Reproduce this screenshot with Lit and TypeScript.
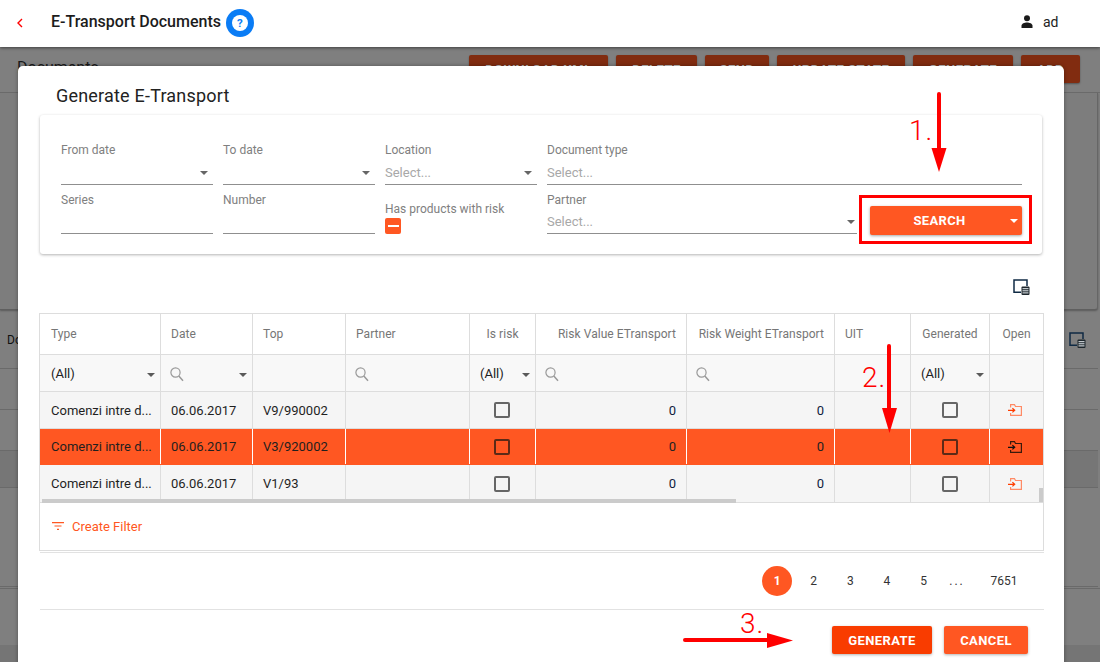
import { LitElement, html, css } from "lit";
import { customElement } from "lit/decorators.js";

const caret = html`<svg class="caret" width="8" height="4" viewBox="0 0 8 4"><path d="M0 0h8L4 4z" fill="currentColor"/></svg>`;
const lens = html`<svg class="lens" width="14" height="15" viewBox="0 0 14 15"><circle cx="5.500" cy="5.500" r="4.600" fill="none" stroke="#999" stroke-width="1.200"/><path d="M8.800 9L13 13.800" stroke="#999" stroke-width="1.500" fill="none"/></svg>`;
const chooser = html`<svg width="17" height="16" viewBox="0 0 17 16"><path d="M8 13.300H1V1h13v6" fill="none" stroke="#0f2a44" stroke-width="1.500"/><rect x="8.500" y="7.500" width="8" height="8.500" rx="1" fill="#1d262c"/><path d="M9.500 9.700h6M9.500 11.800h6M9.500 13.900h6" stroke="#e8eef2" stroke-width="1"/></svg>`;
const openIcon = html`<svg class="open" width="14" height="12" viewBox="0 0 14 12"><path class="fold" d="M2.600 3.500V.7h3.900l1 1.800h5.900v8.800H2.600V9" fill="none" stroke-width="1.200"/><path d="M0 6.300h6.500M4.400 4.200l2.300 2.100-2.300 2.100" fill="none" stroke="currentColor" stroke-width="1.200"/></svg>`;

const columns = ["Type", "Date", "Top", "Partner", "Is risk", "Risk Value ETransport", "Risk Weight ETransport", "UIT", "Generated", "Open"];
const headAlign = ["", "", "", "", "center", "end", "end", "", "center", "center"];
const rows = [
  { top: "V9/990002", cls: "r1" },
  { top: "V3/920002", cls: "sel" },
  { top: "V1/93", cls: "r3" },
];
const bgButtons = ["DOWNLOAD XML", "DELETE", "SEND", "UPDATE STATE", "GENERATE", "ADD"];
const bgWidths = ["w139", "w81", "w64", "w128", "w100", "w59"];

@customElement("app-root")
export class AppRoot extends LitElement {
  static styles = css`
    :host { display: block; font-family: Roboto, "Liberation Sans", sans-serif; color: #212121; }
    .page { position: relative; width: 1100px; height: 662px; overflow: hidden; background: #7f7f7f; }
    .header { height: 47px; background: #fff; display: flex; align-items: center; padding: 0 43px 2px 17px; box-sizing: border-box; box-shadow: 0 1px 3px rgba(0,0,0,.5); position: relative; }
    .back { width: 6px; height: 10px; margin-right: 28px; }
    .apptitle { font-size: 16px; font-weight: 500; color: #1c1c1c; margin: -2px 5px 0 0; }
    .help { width: 28px; height: 28px; border-radius: 50%; background: #0a7cf5; display: flex; align-items: center; justify-content: center; }
    .help span { width: 16px; height: 16px; border-radius: 50%; background: #fff; color: #0a7cf5; font-size: 11.500px; font-weight: 700; line-height: 16px; text-align: center; }
    .user { margin: -2px 0 0 auto; display: flex; align-items: center; gap: 10px; font-size: 14px; color: #222; }
    .user span { width: 14px; }

    .bgbar { height: 46px; display: flex; align-items: flex-start; justify-content: space-between; padding: 8px 20px 0 17px; box-sizing: border-box; border-bottom: 1px solid #6c6c6c; }
    .bgtitle { font-size: 16px; color: #1a1a1a; padding-top: 3px; }
    .bgbtns { display: flex; gap: 8px; }
    .bgbtn { height: 28px; background: #812c10; border-radius: 2px; color: #c0c0c0; font-size: 13px; font-weight: 700; letter-spacing: .5px; display: flex; align-items: center; justify-content: center; box-shadow: 0 1px 2px rgba(0,0,0,.35); white-space: nowrap; overflow: hidden; }
    .w139 { width: 139px; } .w81 { width: 81px; } .w64 { width: 64px; } .w128 { width: 128px; } .w100 { width: 100px; } .w59 { width: 59px; }
    .bgcard { height: 216px; margin-right: 2px; border-right: 1px solid #666; border-bottom: 1px solid #5f5f5f; border-radius: 0 0 3px 0; box-shadow: 0 1px 2px rgba(0,0,0,.3); background: #7d7d7d; }
    .bgstrip { height: 58px; display: flex; align-items: center; justify-content: space-between; padding: 2px 14px 0 7px; box-sizing: border-box; font-size: 12px; color: #111; }
    .bgrow { height: 41px; box-sizing: border-box; border-top: 1px solid #6a6a6a; margin-right: 2px; }
    .bgrow.short { height: 37px; background: #767676; }
    .bgrow.tall { height: 100px; border-bottom: 1px solid #6a6a6a; margin-bottom: 1px; }
    .bgtail { height: 56px; border-top: 1px solid #6a6a6a; }
    .bgfoot { height: 18px; background: #757575; }

    .modal { position: absolute; left: 18px; top: 66px; width: 1046px; height: 620px; box-sizing: border-box; padding: 0 20px 0 22px; background: #fff; border-radius: 5px; box-shadow: 0 0 4px rgba(0,0,0,.35); }
    .mtitle { height: 49px; box-sizing: border-box; padding: 19px 0 0 16px; font-size: 18px; line-height: 22px; color: #222; letter-spacing: .2px; }
    .card { width: 1002px; height: 139px; box-sizing: border-box; padding: 28px 20px 0 21px; background: #fff; border-radius: 3px; box-shadow: 0 1px 3px rgba(0,0,0,.3); display: grid; grid-template-columns: 152px 152px 152px 310px 155px; grid-template-rows: 42px 41px; column-gap: 10px; row-gap: 8px; }
    .card > :nth-child(4) { grid-column: 4 / 6; }
    .field { display: flex; flex-direction: column; min-width: 0; }
    .label { font-size: 12px; line-height: 14px; color: #808080; }
    .ctl { flex: 1; border-bottom: 1px solid #8f8f8f; display: flex; align-items: flex-end; justify-content: space-between; padding-bottom: 4px; font-size: 13px; line-height: 15px; color: #a8a8a8; box-sizing: border-box; }
    .ctl .caret { color: #666; margin: 0 5px 5px 0; }
    .partner .ctl .caret { margin-right: 2px; }
    .risk { justify-content: flex-end; gap: 2px; }
    .tri { width: 16px; height: 16px; border-radius: 2px; background: #ff5722; display: flex; align-items: center; justify-content: center; }
    .tri i { display: block; width: 11px; height: 2px; background: #fff; }
    .searchbtn { justify-self: end; align-self: end; height: 29px; margin-bottom: -1px; width: 152px; background: #ff5722; color: #fff; border-radius: 2px; box-shadow: 0 1px 3px rgba(0,0,0,.35); display: flex; align-items: center; font-size: 13px; font-weight: 700; letter-spacing: .3px; }
    .searchbtn b { flex: 1; text-align: center; font-weight: 700; padding-left: 1px; }
    .searchbtn .caret { color: #fff; margin-right: 4px; margin-left: 2px; }
    .toolrow { height: 59px; display: flex; justify-content: flex-end; align-items: flex-start; padding: 25px 14px 0 0; box-sizing: border-box; }

    .grid { position: relative; margin-left: -1px; width: 1005px; height: 238px; box-sizing: border-box; border: 1px solid #ddd; font-size: 13px; }
    .tr { display: grid; grid-template-columns: 121px 92px 93px 124px 66px 151px 148px 76px 79px 53px; box-sizing: border-box; border-bottom: 1px solid #ddd; }
    .td { display: flex; align-items: center; padding: 0 10px; border-right: 1px solid #ddd; box-sizing: border-box; min-width: 0; white-space: nowrap; }
    .td:first-child { padding-left: 11px; }
    .td:last-child { border-right: none; }
    .head { height: 41px; color: #767676; font-size: 12px; letter-spacing: .05px; }
    .filters { height: 37px; background: #f8f8f8; }
    .body { background: #f5f5f5; color: #1f1f1f; }
    .r1 { height: 37px; }
    .r3 { height: 38px; }
    .sel { height: 36px; background: #ff5722; border-bottom: 1px solid #ff5722; }
    .sel .td { border-right-color: #fff; }
    .center { justify-content: center; padding: 0 3px 0 2px; }
    .head .center { padding: 0 2px; }
    .end { justify-content: flex-end; padding: 0 10px 0 0; }
    .num { color: #101c3e; justify-content: flex-end; }
    .sel .num { color: #222; }
    .sp { justify-content: space-between; padding-right: 5px; }
    .filters .caret { color: #5a5a5a; margin-top: 3px; }
    .lens { margin: 2px 0 0 -1px; }
    .cb { width: 16px; height: 16px; box-sizing: border-box; border: 2px solid #666; border-radius: 2px; }
    .sel .cb { border-color: #5c2a17; }
    .open { color: #ff3d00; margin-right: 3px; }
    .open .fold { stroke: #ff8a65; }
    .sel .open { color: #111; }
    .sel .open .fold { stroke: #3a1a0c; }
    .hscroll { position: absolute; left: 2px; top: 185px; width: 694px; height: 4px; background: #cbcbcb; }
    .vscroll { position: absolute; right: 0; top: 174px; width: 4px; height: 14px; background: #cbcbcb; }
    .cfilter { height: 46px; display: flex; align-items: center; padding-left: 12px; gap: 8px; color: #ff5722; background: #fff; }
    .foot1 { height: 57px; width: 1004px; margin-top: 1px; box-sizing: border-box; border-top: 1px solid #e2e2e2; display: flex; align-items: center; }
    .pager { margin-left: auto; display: flex; align-items: center; font-size: 12px; color: #333; height: 30px; padding-right: 17px; }
    .pager span { width: 36.700px; text-align: center; }
    .pager .cur { width: 30px; height: 30px; border-radius: 50%; background: #ff5722; color: #fff; font-weight: 700; line-height: 30px; margin-right: 3px; }
    .pager .dots { width: 30px; letter-spacing: 2px; }
    .pager .last { width: 46px; margin-left: 9px; }
    .foot2 { width: 1004px; box-sizing: border-box; border-top: 1px solid #e2e2e2; padding: 16px 16px 0 0; display: flex; justify-content: flex-end; gap: 12px; }
    .btn { height: 28px; border-radius: 2px; color: #fff; font-size: 13px; font-weight: 700; letter-spacing: .4px; display: flex; align-items: center; justify-content: center; box-shadow: 0 1px 3px rgba(0,0,0,.3); }
    .gen { width: 100px; background: #f93c00; }
    .can { width: 84px; background: #ff5722; }
    .notes { position: absolute; left: 0; top: 0; pointer-events: none; }
    .notes text { font-family: Roboto, "Liberation Sans", sans-serif; font-size: 28px; font-weight: 300; letter-spacing: 1px; fill: #f00; }
  `;

  private filterCell(i: number) {
    if (i === 0 || i === 4 || i === 8) return html`<div class="td sp"><span>(All)</span>${caret}</div>`;
    if (i === 1) return html`<div class="td sp">${lens}${caret}</div>`;
    if (i === 3 || i === 5 || i === 6) return html`<div class="td">${lens}</div>`;
    return html`<div class="td"></div>`;
  }

  private row(r: { top: string; cls: string }) {
    return html`<div class="tr body ${r.cls}">
      <div class="td">Comenzi intre d...</div>
      <div class="td">06.06.2017</div>
      <div class="td">${r.top}</div>
      <div class="td"></div>
      <div class="td center"><div class="cb"></div></div>
      <div class="td num">0</div>
      <div class="td num">0</div>
      <div class="td"></div>
      <div class="td center"><div class="cb"></div></div>
      <div class="td center">${openIcon}</div>
    </div>`;
  }

  render() {
    return html`<div class="page">
      <div class="header">
        <svg class="back" viewBox="0 0 6 10"><path d="M5 1L1 5l4 4" fill="none" stroke="#f00" stroke-width="1.400"/></svg>
        <div class="apptitle">E-Transport Documents</div>
        <div class="help"><span>?</span></div>
        <div class="user">
          <svg width="12" height="13" viewBox="0 0 12 13"><circle cx="6" cy="3.200" r="3" fill="#1a1a1a"/><path d="M.5 13v-2.200C.5 8.600 3.500 7.400 6 7.400s5.500 1.200 5.500 3.400V13z" fill="#1a1a1a"/></svg>
          <span>ad</span>
        </div>
      </div>
      <div class="bgbar">
        <div class="bgtitle">Documents</div>
        <div class="bgbtns">${bgButtons.map((b, i) => html`<div class="bgbtn ${bgWidths[i]}">${b}</div>`)}</div>
      </div>
      <div class="bgcard"></div>
      <div class="bgstrip"><span>Do</span>${chooser}</div>
      <div class="bgrow"></div>
      <div class="bgrow"></div>
      <div class="bgrow short"></div>
      <div class="bgrow tall"></div>
      <div class="bgtail"></div>
      <div class="bgfoot"></div>

      <div class="modal">
        <div class="mtitle">Generate E-Transport</div>
        <div class="card">
          <div class="field"><div class="label">From date</div><div class="ctl"><span></span>${caret}</div></div>
          <div class="field"><div class="label">To date</div><div class="ctl"><span></span>${caret}</div></div>
          <div class="field"><div class="label">Location</div><div class="ctl"><span>Select...</span>${caret}</div></div>
          <div class="field"><div class="label">Document type</div><div class="ctl"><span>Select...</span></div></div>
          <div class="field"><div class="label">Series</div><div class="ctl"></div></div>
          <div class="field"><div class="label">Number</div><div class="ctl"></div></div>
          <div class="field risk"><div class="label">Has products with risk</div><div class="tri"><i></i></div></div>
          <div class="field partner"><div class="label">Partner</div><div class="ctl"><span>Select...</span>${caret}</div></div>
          <div class="searchbtn"><b>SEARCH</b>${caret}</div>
        </div>
        <div class="toolrow">${chooser}</div>
        <div class="grid">
          <div class="tr head">${columns.map((c, i) => html`<div class="td ${headAlign[i]}">${c}</div>`)}</div>
          <div class="tr filters">${columns.map((_, i) => this.filterCell(i))}</div>
          ${rows.map((r) => this.row(r))}
          <div class="hscroll"></div>
          <div class="vscroll"></div>
          <div class="cfilter">
            <svg width="12" height="8" viewBox="0 0 12 8"><path d="M0 .6h12M2.500 4h7M5 7.400h2" stroke="#ff5722" stroke-width="1.100" fill="none"/></svg>
            <span>Create Filter</span>
          </div>
        </div>
        <div class="foot1">
          <div class="pager">
            <span class="cur">1</span><span>2</span><span>3</span><span>4</span><span>5</span><span class="dots">...</span><span class="last">7651</span>
          </div>
        </div>
        <div class="foot2">
          <div class="btn gen">GENERATE</div>
          <div class="btn can">CANCEL</div>
        </div>
      </div>

      <svg class="notes" width="1100" height="662" viewBox="0 0 1100 662">
        <rect x="860.500" y="196.500" width="170" height="46" fill="none" stroke="#f00" stroke-width="3"/>
        <path d="M939 94V150" stroke="#f00" stroke-width="4" stroke-linecap="round"/>
        <path d="M931.500 148h15L939 172z" fill="#f00"/>
        <text x="909" y="140">1.</text>
        <path d="M889 346V410" stroke="#f00" stroke-width="4" stroke-linecap="round"/>
        <path d="M882 408h15l-7.500 25z" fill="#f00"/>
        <text x="862" y="387">2.</text>
        <path d="M685 640H770" stroke="#f00" stroke-width="4" stroke-linecap="round"/>
        <path d="M767 633v15l26-7.500z" fill="#f00"/>
        <text x="740" y="633">3.</text>
      </svg>
    </div>`;
  }
}
